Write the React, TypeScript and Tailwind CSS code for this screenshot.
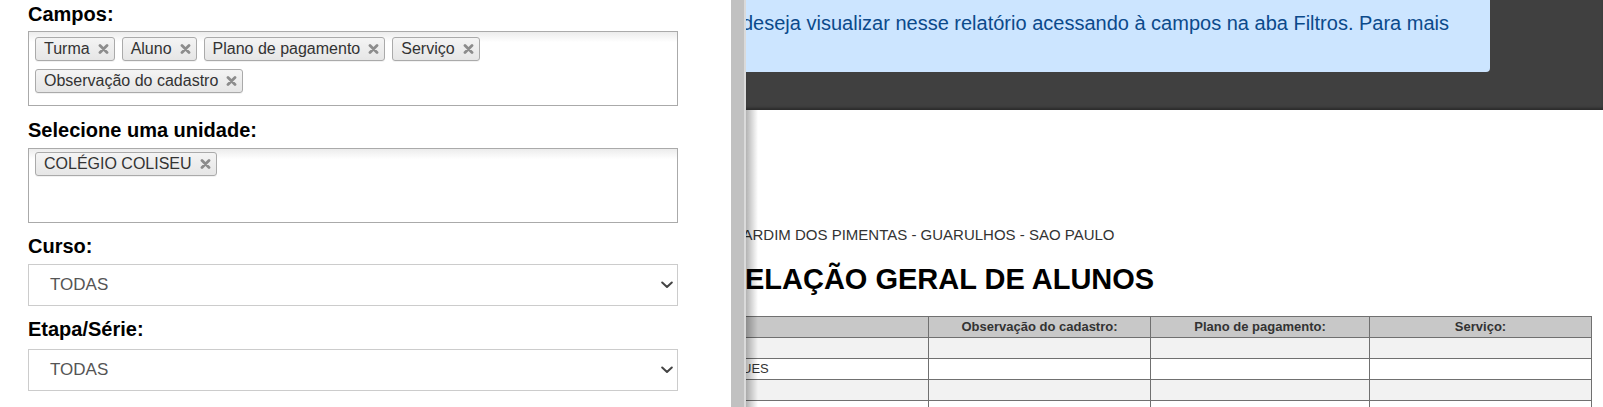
import React from "react";

function XIcon() {
  return (
    <svg className="ml-[8px] shrink-0" width="11" height="10" viewBox="0 0 11 10">
      <path d="M2 1.5 L9 8.5 M9 1.5 L2 8.5" stroke="#8c8c8c" strokeWidth="2.8" strokeLinecap="round" />
    </svg>
  );
}

function Tag({ label }: { label: string }) {
  return (
    <span className="inline-flex items-center h-[24px] border border-[#aaa] rounded-[3px] bg-linear-to-b from-[#f4f4f4] to-[#e6e6e6] pl-[8px] pr-[5px] text-[16px] leading-none text-[#333] shadow-[0_1px_0_rgba(0,0,0,0.05)] whitespace-nowrap">
      {label}
      <XIcon />
    </span>
  );
}

function Chevron() {
  return (
    <svg width="12" height="8" viewBox="0 0 12 8">
      <path d="M1.2 1.5 L6 6 L10.8 1.5" fill="none" stroke="#444" strokeWidth="2" strokeLinecap="round" strokeLinejoin="round" />
    </svg>
  );
}

function Label({ text, className }: { text: string; className: string }) {
  return <div className={"h-[24px] text-[20px] leading-[24px] font-bold text-black " + className}>{text}</div>;
}

export default function App() {
  return (
    <div className="flex w-[1603px] h-[407px] overflow-hidden bg-white font-['Liberation_Sans',Arial,sans-serif]">
      {/* Left panel */}
      <div className="w-[731px] shrink-0 bg-white pl-[28px] pt-[2px] flex flex-col">
        <Label text="Campos:" className="" />
        <div className="mt-[5px] w-[650px] h-[75px] border border-[#aaa] bg-linear-to-b from-[#ececec] via-white via-[14%] to-white pl-[6px] pt-[5px] flex flex-wrap content-start gap-x-[7px] gap-y-[8px]">
          <Tag label="Turma" />
          <Tag label="Aluno" />
          <Tag label="Plano de pagamento" />
          <Tag label="Serviço" />
          <Tag label="Observação do cadastro" />
        </div>
        <Label text="Selecione uma unidade:" className="mt-[12px]" />
        <div className="mt-[6px] w-[650px] h-[75px] border border-[#aaa] bg-linear-to-b from-[#ececec] via-white via-[14%] to-white pl-[6px] pt-[3px] flex flex-wrap content-start gap-x-[7px]">
          <Tag label="COLÉGIO COLISEU" />
        </div>
        <Label text="Curso:" className="mt-[11px]" />
        <div className="mt-[6px] w-[650px] h-[42px] border border-[#ccc] bg-white flex items-center justify-between pl-[21px] pr-[4px] text-[17px] text-[#555]">
          <span>TODAS</span>
          <Chevron />
        </div>
        <Label text="Etapa/Série:" className="mt-[11px]" />
        <div className="mt-[8px] w-[650px] h-[42px] border border-[#ccc] bg-white flex items-center justify-between pl-[21px] pr-[4px] text-[17px] text-[#555]">
          <span>TODAS</span>
          <Chevron />
        </div>
      </div>

      {/* Divider */}
      <div className="w-[15px] shrink-0 bg-[#c1c1c1] border-r-2 border-[#dadada]" />

      {/* Right content */}
      <div className="relative flex-1 overflow-hidden bg-white">
        <div className="h-[110px] bg-[#404040] shadow-[inset_0_-3px_3px_-1px_rgba(0,0,0,0.35)]">
          <div className="h-[72px] w-[744px] bg-[#cce5ff] rounded-br-[4px] overflow-hidden pt-[11px]">
            <div className="ml-[-4px] whitespace-nowrap text-[20px] leading-[24px] text-[#0b4a8b]">
              deseja visualizar nesse relatório acessando à campos na aba Filtros. Para mais
            </div>
          </div>
        </div>

        <div className="mt-[116px] ml-[-11px] h-[18px] text-[15px] leading-[18px] text-[#333] whitespace-nowrap">
          JARDIM DOS PIMENTAS - GUARULHOS - SAO PAULO
        </div>
        <div className="mt-[19px] ml-[-22px] h-[32px] text-[29px] leading-[32px] font-bold text-black whitespace-nowrap">
          RELAÇÃO GERAL DE ALUNOS
        </div>

        <div className="mt-[21px] w-[846px] border-t border-[#707070] text-[13px] text-[#333]">
          <div className="grid grid-cols-[183px_222px_219px_222px] h-[21px] bg-[#c8c8c8] font-bold">
            <div className="border-r border-b border-[#707070]" />
            <div className="border-r border-b border-[#707070] flex items-center justify-center">Observação do cadastro:</div>
            <div className="border-r border-b border-[#707070] flex items-center justify-center">Plano de pagamento:</div>
            <div className="border-r border-b border-[#707070] flex items-center justify-center">Serviço:</div>
          </div>
          <div className="grid grid-cols-[183px_222px_219px_222px] h-[21px] bg-[#f2f2f2]">
            <div className="border-r border-b border-[#707070]" />
            <div className="border-r border-b border-[#707070]" />
            <div className="border-r border-b border-[#707070]" />
            <div className="border-r border-b border-[#707070]" />
          </div>
          <div className="grid grid-cols-[183px_222px_219px_222px] h-[21px] bg-white">
            <div className="border-r border-b border-[#707070] overflow-hidden flex items-center whitespace-nowrap">
              <span className="ml-[-56px]">RODRIGUES</span>
            </div>
            <div className="border-r border-b border-[#707070]" />
            <div className="border-r border-b border-[#707070]" />
            <div className="border-r border-b border-[#707070]" />
          </div>
          <div className="grid grid-cols-[183px_222px_219px_222px] h-[21px] bg-[#f2f2f2]">
            <div className="border-r border-b border-[#707070]" />
            <div className="border-r border-b border-[#707070]" />
            <div className="border-r border-b border-[#707070]" />
            <div className="border-r border-b border-[#707070]" />
          </div>
          <div className="grid grid-cols-[183px_222px_219px_222px] h-[21px] bg-white">
            <div className="border-r border-b border-[#707070]" />
            <div className="border-r border-b border-[#707070]" />
            <div className="border-r border-b border-[#707070]" />
            <div className="border-r border-b border-[#707070]" />
          </div>
        </div>

        <div className="absolute left-0 top-[110px] bottom-0 w-[12px] bg-linear-to-r from-black/30 to-transparent" />
      </div>
    </div>
  );
}
